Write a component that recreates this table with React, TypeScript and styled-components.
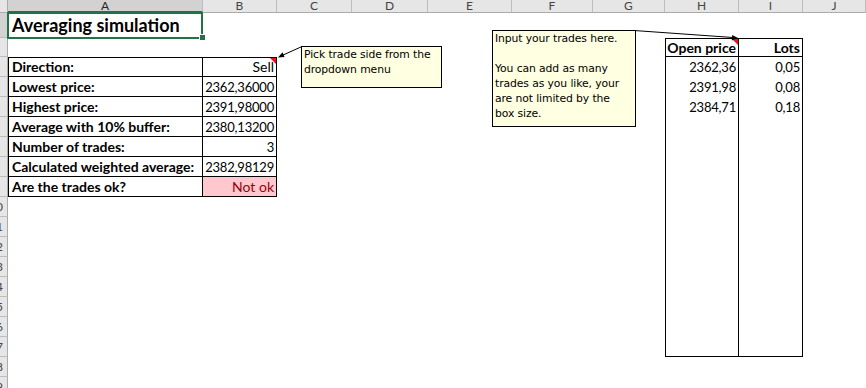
import { FC, Fragment } from "react"
import styled, { createGlobalStyle, css } from "styled-components"

const GlobalStyle = createGlobalStyle`
  html, body {
    margin: 0;
    padding: 0;
    background: #fff;
    overflow: hidden;
  }
  body {
    font-family: Lato, "Liberation Sans", sans-serif;
  }
`

const COLUMNS = ["A", "B", "C", "D", "E", "F", "G", "H", "I", "J"]
const COLUMN_WIDTHS = [195, 74, 75, 76, 84, 81, 72, 74, 64]
const ROW_COUNT = 19

type Borders = { t?: boolean; r?: boolean; b?: boolean; l?: boolean }

interface CellSpec {
  text?: string
  bold?: boolean
  right?: boolean
  num?: boolean
  fill?: string
  color?: string
  note?: boolean
  border?: Borders
}

const cells: Record<string, CellSpec> = {}

const summary: [string, string][] = [
  ["Direction:", "Sell"],
  ["Lowest price:", "2362,36000"],
  ["Highest price:", "2391,98000"],
  ["Average with 10% buffer:", "2380,13200"],
  ["Number of trades:", "3"],
  ["Calculated weighted average:", "2382,98129"],
  ["Are the trades ok?", "Not ok"],
]

summary.forEach(([label, value], i) => {
  const row = 3 + i
  cells[`A${row}`] = { text: label, bold: true, border: { t: i === 0, l: true, r: true, b: true } }
  cells[`B${row}`] = {
    text: value,
    right: true,
    num: /\d/.test(value),
    border: { t: i === 0, r: true, b: true },
  }
})
cells.B3.note = true
cells.B9 = { ...cells.B9, fill: "#ffc7ce", color: "#9c0006" }

const trades: [string, string][] = [
  ["2362,36", "0,05"],
  ["2391,98", "0,08"],
  ["2384,71", "0,18"],
]

cells.H2 = { text: "Open price", bold: true, right: true, note: true, border: { t: true, l: true, r: true, b: true } }
cells.I2 = { text: "Lots", bold: true, right: true, border: { t: true, r: true, b: true } }
for (let row = 3; row <= 17; row++) {
  const trade = trades[row - 3]
  cells[`H${row}`] = { text: trade?.[0], right: true, num: true, border: { l: true, r: true, b: row === 17 } }
  cells[`I${row}`] = { text: trade?.[1], right: true, num: true, border: { r: true, b: row === 17 } }
}

const Sheet = styled.div`
  position: relative;
  width: 866px;
  height: 388px;
  overflow: hidden;
`

const Grid = styled.div`
  display: grid;
  grid-template-columns: 8px ${COLUMN_WIDTHS.map((w) => `${w}px`).join(" ")} 1fr;
  grid-template-rows: 13px 25px 19px repeat(${ROW_COUNT - 2}, 20px);
`

const Corner = styled.div`
  background: #e6e6e6;
  border-right: 1px solid #ababab;
  border-bottom: 1px solid #ababab;
`

const ColHeader = styled.div<{ $active?: boolean }>`
  display: flex;
  justify-content: center;
  align-items: flex-start;
  font-size: 12px;
  line-height: 11px;
  color: ${({ $active }) => ($active ? "#262626" : "#444")};
  background: ${({ $active }) => ($active ? "#d2d2d2" : "#e6e6e6")};
  border-right: 1px solid #bdbdbd;
  border-bottom: ${({ $active }) => ($active ? "2px solid #217346" : "1px solid #ababab")};
`

const RowHeader = styled.div<{ $active?: boolean }>`
  display: flex;
  align-items: center;
  justify-content: flex-end;
  overflow: hidden;
  background: ${({ $active }) => ($active ? "#d2d2d2" : "#e6e6e6")};
  border-right: 1px solid ${({ $active }) => ($active ? "#217346" : "#ababab")};
  border-bottom: 1px solid #bdbdbd;
  color: #444;
  font-size: 12px;
`

const RowNumber = styled.span`
  flex: none;
  width: 22px;
  text-align: center;
`

const line = "1px solid #000"

const Cell = styled.div<{
  $bold?: boolean
  $right?: boolean
  $num?: boolean
  $fill?: string
  $color?: string
  $note?: boolean
  $b: Borders
}>`
  position: relative;
  display: flex;
  align-items: center;
  justify-content: ${({ $right }) => ($right ? "flex-end" : "flex-start")};
  padding: 0 2px 0 3px;
  min-width: 0;
  white-space: nowrap;
  font-size: ${({ $num }) => ($num ? "13px" : "14px")};
  line-height: 20px;
  letter-spacing: ${({ $num }) => ($num ? "-0.2px" : "0")};
  font-weight: ${({ $bold }) => ($bold ? 700 : 400)};
  color: ${({ $color }) => $color ?? "#000"};
  background: ${({ $fill }) => $fill ?? "transparent"};
  border-top: ${({ $b }) => ($b.t ? line : "0")};
  border-right: ${({ $b }) => ($b.r ? line : "0")};
  border-bottom: ${({ $b }) => ($b.b ? line : "0")};
  border-left: ${({ $b }) => ($b.l ? line : "0")};

  ${({ $note }) =>
    $note &&
    css`
      &::after {
        content: "";
        position: absolute;
        top: 0;
        right: 0;
        border-top: 6px solid #e81123;
        border-left: 6px solid transparent;
      }
    `}
`

const TitleCell = styled.div`
  position: relative;
  display: flex;
  align-items: flex-end;
  padding: 0 0 3px 4px;
  font-size: 18px;
  font-weight: 700;
  line-height: 20px;
  white-space: nowrap;

  &::before {
    content: "";
    position: absolute;
    inset: -1px 0 -1px -1px;
    border: 2px solid #217346;
    pointer-events: none;
  }
`

const FillHandle = styled.span`
  position: absolute;
  right: -3px;
  bottom: -3px;
  width: 5px;
  height: 5px;
  background: #217346;
  border: 1px solid #fff;
`

const Note = styled.div<{ $x: number; $y: number; $w: number; $h: number }>`
  position: absolute;
  left: ${({ $x }) => $x}px;
  top: ${({ $y }) => $y}px;
  width: ${({ $w }) => $w}px;
  height: ${({ $h }) => $h}px;
  box-sizing: border-box;
  padding: 0 2px;
  background: #ffffe1;
  border: 1px solid #000;
  font-family: "DejaVu Sans", Verdana, sans-serif;
  font-size: 10.8px;
  letter-spacing: -0.1px;
  line-height: 15px;
  color: #000;
  white-space: pre-line;
`

const Leaders = styled.svg`
  position: absolute;
  inset: 0;
  pointer-events: none;
`

const renderCell = (col: string, row: number) => {
  const key = `${col}${row}`
  if (key === "A1") {
    return (
      <TitleCell key={key}>
        Averaging simulation
        <FillHandle />
      </TitleCell>
    )
  }
  const spec = cells[key] ?? {}
  return (
    <Cell
      key={key}
      $bold={spec.bold}
      $right={spec.right}
      $num={spec.num}
      $fill={spec.fill}
      $color={spec.color}
      $note={spec.note}
      $b={spec.border ?? {}}
    >
      {spec.text}
    </Cell>
  )
}

const App: FC = () => {
  const rows = Array.from({ length: ROW_COUNT }, (_, i) => i + 1)

  return (
    <>
      <GlobalStyle />
      <Sheet>
        <Grid>
          <Corner />
          {COLUMNS.map((col) => (
            <ColHeader key={col} $active={col === "A"}>
              {col}
            </ColHeader>
          ))}
          {rows.map((row) => (
            <Fragment key={row}>
              <RowHeader $active={row === 1}>
                <RowNumber>{row}</RowNumber>
              </RowHeader>
              {COLUMNS.map((col) => renderCell(col, row))}
            </Fragment>
          ))}
        </Grid>

        <Leaders width="866" height="388">
          <line x1="302" y1="46.5" x2="282" y2="55.5" stroke="#000" strokeWidth="1" />
          <polygon points="278,57.5 284.5,56.9 282.5,52.3" fill="#000" />
          <line x1="634" y1="30.5" x2="733" y2="37.5" stroke="#000" strokeWidth="1" />
          <polygon points="738,38 731.8,40.5 732.2,35" fill="#000" />
        </Leaders>

        <Note $x={301} $y={46} $w={141} $h={42}>
          {"Pick trade side from the\ndropdown menu"}
        </Note>
        <Note $x={492} $y={30} $w={144} $h={97}>
          {"Input your trades here.\n\nYou can add as many\ntrades as you like, your\nare not limited by the\nbox size."}
        </Note>
      </Sheet>
    </>
  )
}

export default App
